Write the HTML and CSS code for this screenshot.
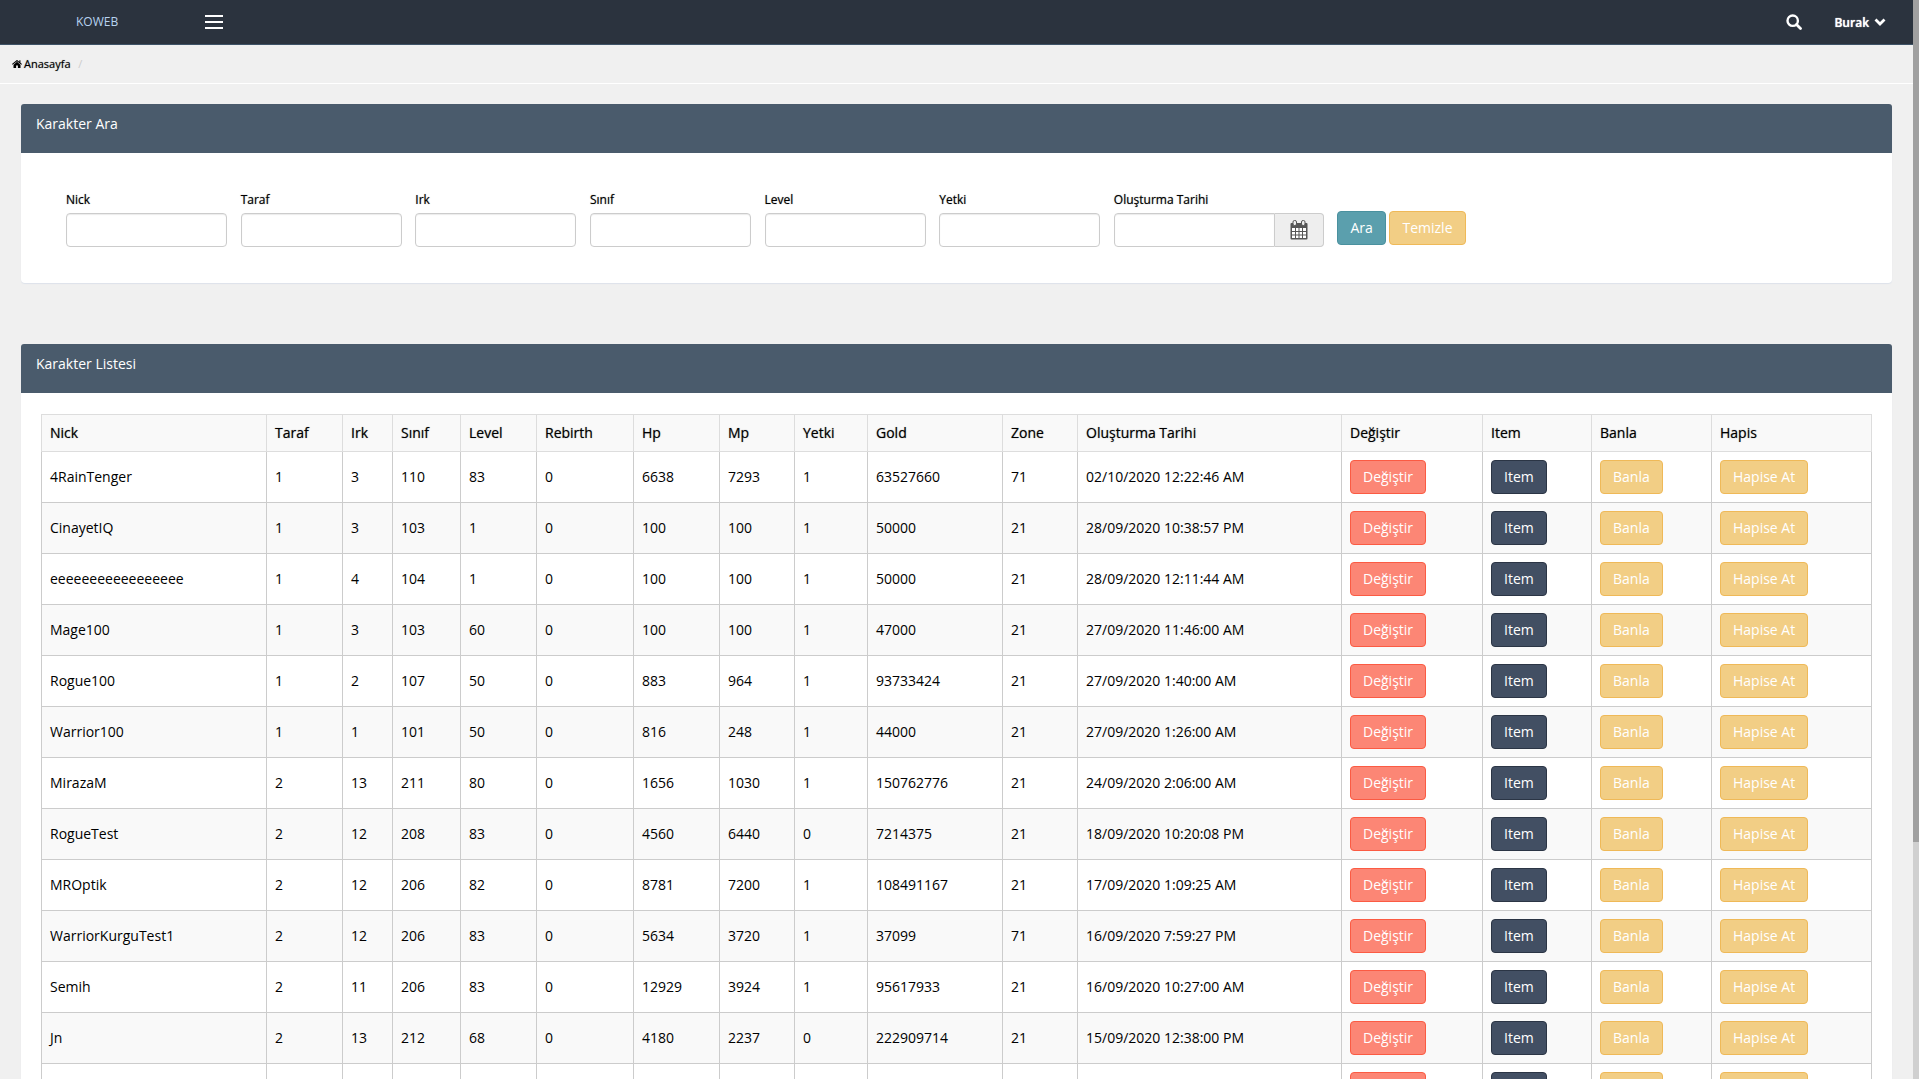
FILE: index.html
```html
<!DOCTYPE html>
<html lang="tr">
<head>
    <meta charset="UTF-8">
    <meta name="viewport" content="width=device-width, initial-scale=1.0">
    <title>KOWEB - Karakterler</title>
    <link rel="stylesheet" href="styles.css">
</head>
<body>
    <!-- Top bar -->
    <header class="topbar">
        <a class="logo" href="#">KOWEB</a>
        <button type="button" class="menu-toggle" aria-label="Menü">
            <span></span><span></span><span></span>
        </button>
        <button type="button" class="search-btn" aria-label="Ara">
            <svg width="16" height="16" viewBox="0 0 16 16"><circle cx="6.7" cy="6.7" r="5.2" fill="none" stroke="#fff" stroke-width="2.4"/><path d="M10.5 10.5l4 4" stroke="#fff" stroke-width="2.8" stroke-linecap="round"/></svg>
        </button>
        <button type="button" class="user-btn">Burak
            <svg width="12" height="8" viewBox="0 0 12 8"><path d="M1.500 1.500L6 6l4.500-4.500" fill="none" stroke="#fff" stroke-width="2.800"/></svg>
        </button>
    </header>

    <nav class="breadcrumb">
        <a href="#"><svg width="10" height="8" viewBox="0 0 10 8"><path d="M5 1.800L1.500 4.700V8h2.600V5.500h1.800V8h2.600V4.700z"/><path d="M.3 4.400L5 .6l4.700 3.800M7.900.3v2.500" fill="none" stroke="#000" stroke-width="1.100"/></svg>Anasayfa</a>
        <span class="separator">/</span>
    </nav>

    <main class="content">
        <!-- Search form -->
        <section class="panel">
            <h2 class="panel-heading">Karakter Ara</h2>
            <form class="search-form">
                <div class="form-group">
                    <label for="nick">Nick</label>
                    <input type="text" id="nick" class="form-control">
                </div>
                <div class="form-group">
                    <label for="taraf">Taraf</label>
                    <input type="text" id="taraf" class="form-control">
                </div>
                <div class="form-group">
                    <label for="irk">Irk</label>
                    <input type="text" id="irk" class="form-control">
                </div>
                <div class="form-group">
                    <label for="sinif">Sınıf</label>
                    <input type="text" id="sinif" class="form-control">
                </div>
                <div class="form-group">
                    <label for="level">Level</label>
                    <input type="text" id="level" class="form-control">
                </div>
                <div class="form-group">
                    <label for="yetki">Yetki</label>
                    <input type="text" id="yetki" class="form-control">
                </div>
                <div class="form-group">
                    <label for="tarih">Oluşturma Tarihi</label>
                    <div class="input-group">
                        <input type="text" id="tarih" class="form-control">
                        <button type="button" class="addon" aria-label="Takvim">
                            <svg width="18" height="20" viewBox="0 0 18 20"><rect x=".5" y="3" width="17" height="16.500" rx="1" fill="#555"/><path d="M2 8h3v3H2zM6 8h2.500v3H6zM9.500 8H12v3H9.500zM13 8h3v3h-3zM2 12h3v2.500H2zM6 12h2.500v2.500H6zM9.500 12H12v2.500H9.500zM13 12h3v2.500h-3zM2 15.500h3V18H2zM6 15.500h2.500V18H6zM9.500 15.500H12V18H9.500zM13 15.500h3V18h-3z" fill="#fff"/><rect x="3" y=".5" width="3.500" height="5" rx="1.500" fill="#eee" stroke="#555"/><rect x="11.500" y=".5" width="3.500" height="5" rx="1.500" fill="#eee" stroke="#555"/></svg>
                        </button>
                    </div>
                </div>
                <div class="form-buttons">
                    <button type="submit" class="btn btn-info">Ara</button>
                    <button type="reset" class="btn btn-warning">Temizle</button>
                </div>
            </form>
        </section>

        <!-- Character list -->
        <section class="panel">
            <h2 class="panel-heading">Karakter Listesi</h2>
            <div class="panel-body">
                <table class="table">
                    <colgroup>
                        <col class="col-nick"><col class="col-taraf"><col class="col-irk"><col class="col-sinif">
                        <col class="col-level"><col class="col-rebirth"><col class="col-hp"><col class="col-mp">
                        <col class="col-yetki"><col class="col-gold"><col class="col-zone"><col class="col-tarih">
                        <col class="col-degistir"><col class="col-item"><col class="col-banla"><col class="col-hapis">
                    </colgroup>
                    <thead>
                        <tr>
                            <th>Nick</th><th>Taraf</th><th>Irk</th><th>Sınıf</th>
                            <th>Level</th><th>Rebirth</th><th>Hp</th><th>Mp</th>
                            <th>Yetki</th><th>Gold</th><th>Zone</th><th>Oluşturma Tarihi</th>
                            <th>Değiştir</th><th>Item</th><th>Banla</th><th>Hapis</th>
                        </tr>
                    </thead>
                    <tbody id="character-list"></tbody>
                </table>
            </div>
        </section>
    </main>

    <div class="scroll-track"><div class="scroll-thumb"></div></div>

    <script src="script.js"></script>
</body>
</html>
```
FILE: styles.css
```css
* {
    box-sizing: border-box;
}

html {
    height: 100%;
    overflow: hidden;
}

body {
    height: 100%;
    margin: 0;
    padding-right: 6px;
    overflow: hidden;
    background-color: #f0f0f0;
    color: #000;
    font-family: "Open Sans", sans-serif;
    font-size: 14px;
    line-height: 20px;
}

button, input {
    font-family: inherit;
    font-size: 14px;
}

/* Top bar */
.topbar {
    display: flex;
    align-items: center;
    height: 45px;
    padding-right: 27px;
    background-color: #2b333e;
    border-bottom: 1px solid #3e5367;
}

.topbar button {
    padding: 0;
    background: none;
    border: none;
    color: #fff;
    cursor: pointer;
}

.logo {
    width: 205px;
    padding-left: 76px;
    color: #b8d3f0;
    font-size: 12px;
    text-decoration: none;
}

.menu-toggle span {
    display: block;
    width: 18px;
    height: 2px;
    background-color: #fff;
}

.menu-toggle span + span {
    margin-top: 4px;
}

.search-btn {
    display: flex;
    margin-left: auto;
}

.topbar .user-btn {
    display: flex;
    align-items: center;
    gap: 5px;
    margin-left: 32px;
    font-size: 12px;
    font-weight: 600;
    text-shadow: 0 0 1px #fff;
}

/* Breadcrumb */
.breadcrumb {
    height: 39px;
    padding: 9px 12px;
    border-bottom: 1px solid #fff;
    font-size: 11px;
}

.breadcrumb a {
    color: #000;
    text-decoration: none;
    text-shadow: 0 0 1px #777;
}

.breadcrumb svg {
    margin-right: 2px;
}

.separator {
    padding: 0 5px;
    color: #ccc;
}

/* Panels */
.content {
    padding: 20px 21px;
}

.panel {
    margin-bottom: 61px;
    background-color: #fff;
    border-radius: 4px;
    box-shadow: 0 1px 1px #dde2ea;
}

.panel-heading {
    height: 49px;
    margin: 0;
    padding: 10px 15px;
    background-color: #4a5b6c;
    border-radius: 3px 3px 0 0;
    color: #fff;
    font-size: 14px;
    font-weight: 400;
}

.panel-body {
    padding: 21px 20px;
}

/* Search form */
.search-form {
    padding: 37px 45px 36px;
}

.form-group {
    display: inline-block;
    margin-right: 10px;
    vertical-align: top;
}

.form-group label {
    display: block;
    margin-bottom: 3px;
    font-size: 12px;
    text-shadow: 0 0 1px #777;
}

.form-control {
    display: block;
    width: 161px;
    height: 34px;
    padding: 6px 12px;
    background-color: #fff;
    border: 1px solid #ccc;
    border-radius: 4px;
    box-shadow: inset 0 1px 1px #ececec;
}

.input-group {
    display: flex;
}

.input-group .form-control {
    border-radius: 4px 0 0 4px;
}

.addon {
    display: flex;
    align-items: center;
    justify-content: center;
    width: 49px;
    padding: 0;
    background-color: #eee;
    border: 1px solid #ccc;
    border-left: none;
    border-radius: 0 4px 4px 0;
}

.form-buttons {
    display: inline-block;
    padding-top: 21px;
    vertical-align: top;
}

/* Buttons */
.btn {
    height: 34px;
    padding: 6px 12px;
    border: 1px solid transparent;
    border-radius: 4px;
    color: #fff;
    line-height: 20px;
    vertical-align: middle;
    cursor: pointer;
}

.btn-info {
    background-color: #5b9fad;
    border-color: #4a919f;
}

.btn-warning {
    background-color: #f2ce85;
    border-color: #efb958;
}

.btn-danger {
    background-color: #fc8675;
    border-color: #fb5b43;
}

.btn-primary {
    background-color: #424f63;
    border-color: #2b3545;
}

/* Character table, columns grow in proportion */
.table {
    width: 100%;
    table-layout: fixed;
    border-collapse: collapse;
}

.table th,
.table td {
    padding: 8px;
    border: 1px solid #ccc;
    text-align: left;
}

.table th {
    background-color: #f9f9f9;
    border-color: #ddd;
    font-weight: 400;
    text-shadow: 0 0 1px #777;
}

.table tbody tr:nth-child(even) {
    background-color: #f9f9f9;
}

.col-nick { width: 225px; }
.col-taraf { width: 76px; }
.col-irk { width: 50px; }
.col-sinif { width: 68px; }
.col-level { width: 76px; }
.col-rebirth { width: 97px; }
.col-hp { width: 86px; }
.col-mp { width: 75px; }
.col-yetki { width: 73px; }
.col-gold { width: 135px; }
.col-zone { width: 75px; }
.col-tarih { width: 264px; }
.col-degistir { width: 141px; }
.col-item { width: 109px; }
.col-banla { width: 120px; }
.col-hapis { width: 160px; }

/* Thin scrollbar on the right edge */
.scroll-track {
    position: fixed;
    top: 0;
    right: 0;
    bottom: 0;
    width: 6px;
    background-color: #d0d0d0;
}

.scroll-thumb {
    height: 78%;
    background-color: #a0a0a0;
}
```
FILE: script.js
```javascript
// nick, taraf, irk, sinif, level, rebirth, hp, mp, yetki, gold, zone, tarih
const characters = [
    ['4RainTenger', 1, 3, 110, 83, 0, 6638, 7293, 1, 63527660, 71, '02/10/2020 12:22:46 AM'],
    ['CinayetIQ', 1, 3, 103, 1, 0, 100, 100, 1, 50000, 21, '28/09/2020 10:38:57 PM'],
    ['eeeeeeeeeeeeeeeee', 1, 4, 104, 1, 0, 100, 100, 1, 50000, 21, '28/09/2020 12:11:44 AM'],
    ['Mage100', 1, 3, 103, 60, 0, 100, 100, 1, 47000, 21, '27/09/2020 11:46:00 AM'],
    ['Rogue100', 1, 2, 107, 50, 0, 883, 964, 1, 93733424, 21, '27/09/2020 1:40:00 AM'],
    ['Warrior100', 1, 1, 101, 50, 0, 816, 248, 1, 44000, 21, '27/09/2020 1:26:00 AM'],
    ['MirazaM', 2, 13, 211, 80, 0, 1656, 1030, 1, 150762776, 21, '24/09/2020 2:06:00 AM'],
    ['RogueTest', 2, 12, 208, 83, 0, 4560, 6440, 0, 7214375, 21, '18/09/2020 10:20:08 PM'],
    ['MROptik', 2, 12, 206, 82, 0, 8781, 7200, 1, 108491167, 21, '17/09/2020 1:09:25 AM'],
    ['WarriorKurguTest1', 2, 12, 206, 83, 0, 5634, 3720, 1, 37099, 71, '16/09/2020 7:59:27 PM'],
    ['Semih', 2, 11, 206, 83, 0, 12929, 3924, 1, 95617933, 21, '16/09/2020 10:27:00 AM'],
    ['Jn', 2, 13, 212, 68, 0, 4180, 2237, 0, 222909714, 21, '15/09/2020 12:38:00 PM'],
    ['', '', '', '', '', '', '', '', '', '', '', '']
];

const actions = [
    ['Değiştir', 'btn-danger'],
    ['Item', 'btn-primary'],
    ['Banla', 'btn-warning'],
    ['Hapise At', 'btn-warning']
];

const list = document.getElementById('character-list');

characters.forEach(function(character) {
    const row = list.insertRow();

    character.forEach(function(value) {
        row.insertCell().innerText = value;
    });

    actions.forEach(function([label, style]) {
        row.insertCell().innerHTML = `<button type="button" class="btn ${style}">${label}</button>`;
    });
});
```
